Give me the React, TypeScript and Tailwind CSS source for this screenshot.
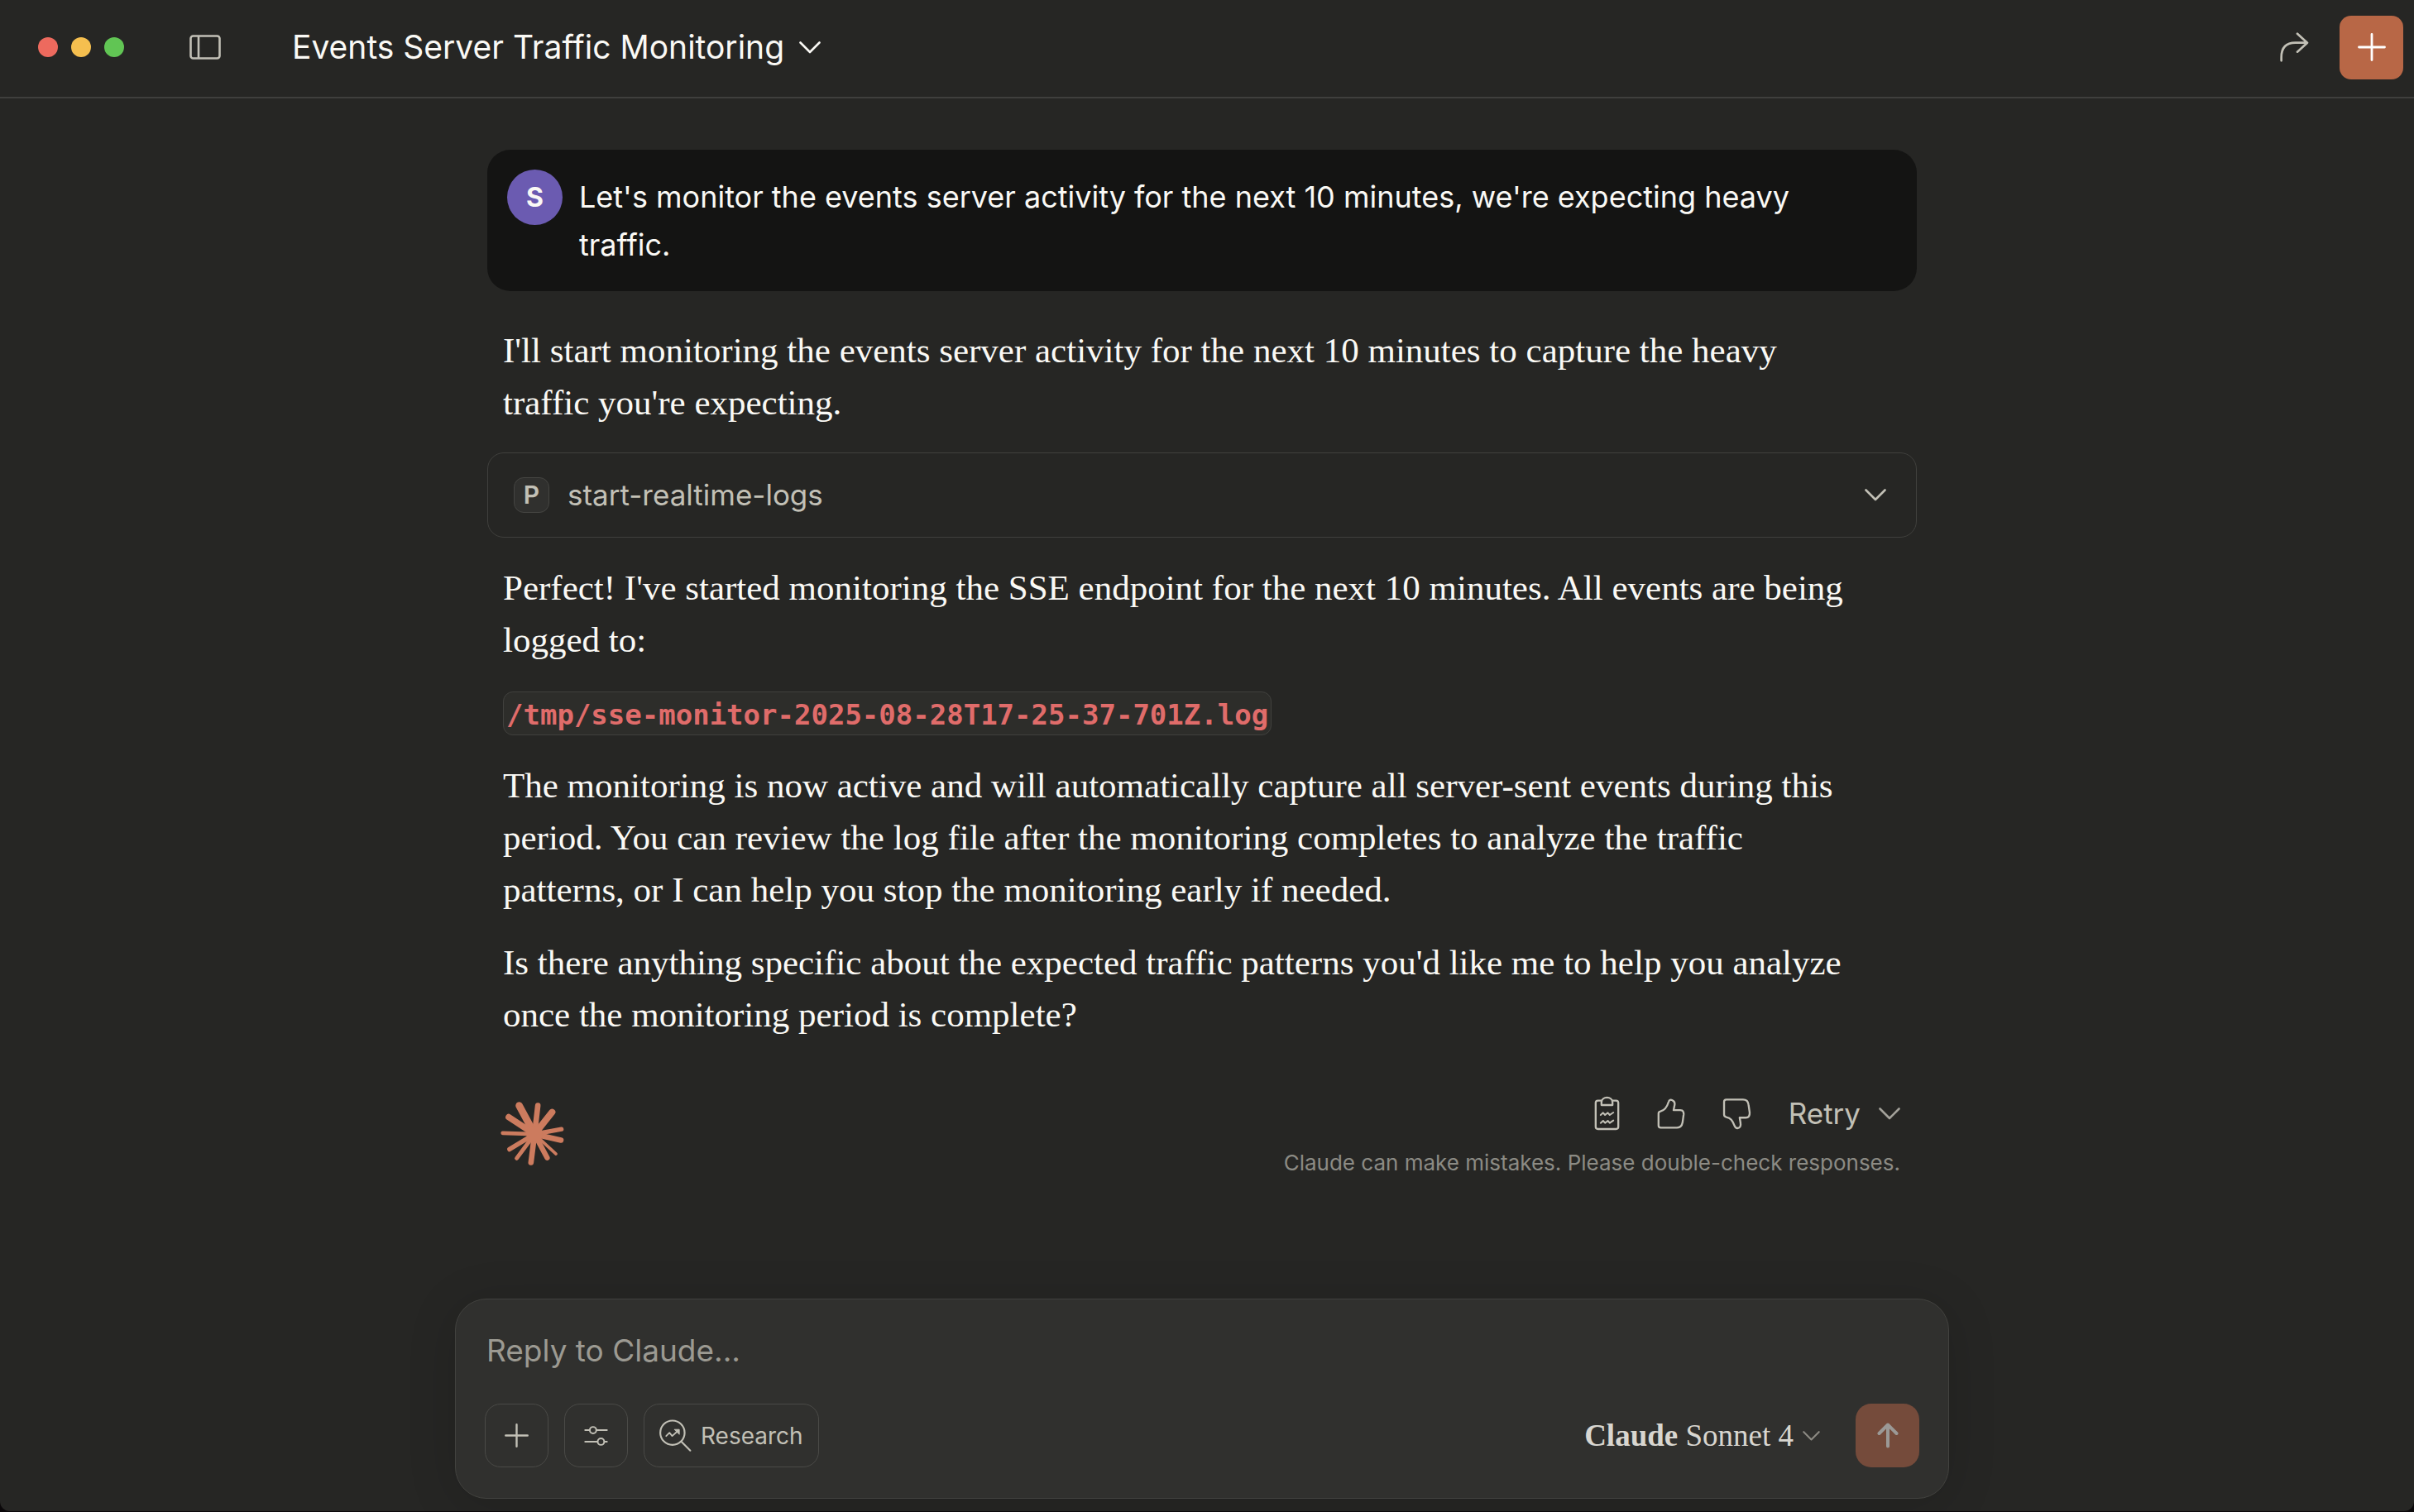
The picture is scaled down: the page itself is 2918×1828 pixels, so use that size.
import React from "react";

const PARAGRAPHS = [
  "The monitoring is now active and will automatically capture all server-sent events during this period. You can review the log file after the monitoring completes to analyze the traffic patterns, or I can help you stop the monitoring early if needed.",
  "Is there anything specific about the expected traffic patterns you'd like me to help you analyze once the monitoring period is complete?",
];

/* Tip position and thickness of each ray of the starburst, around (230, 213). */
const RAYS = [
  [174, 109, 26],
  [242, 109, 20],
  [294, 133, 24],
  [328, 195, 16],
  [326, 235, 20],
  [308, 285, 11],
  [276, 299, 19],
  [217, 316, 20],
  [165, 301, 15],
  [139, 268, 17],
  [114, 209, 14],
  [136, 151, 23],
];

function Starburst() {
  return (
    <svg viewBox="107 95 230 232" className="mt-3 h-[77px] w-[77px]" stroke="#cc7b5e" strokeLinecap="round" aria-hidden="true">
      {RAYS.map(([x, y, w]) => (
        <line key={`${x}-${y}`} x1={230} y1={213} x2={x} y2={y} strokeWidth={w} />
      ))}
      <circle cx={230} cy={213} r={30} fill="#cc7b5e" stroke="none" />
    </svg>
  );
}

function Chevron({ className }: { className: string }) {
  return (
    <svg viewBox="0 0 26 15" className={className} fill="none" stroke="currentColor" strokeWidth={2.6} strokeLinecap="round" strokeLinejoin="round" aria-hidden="true">
      <path d="M1.5 1.5 L13 13 L24.5 1.5" />
    </svg>
  );
}

function Plus({ className, width }: { className: string; width: number }) {
  return (
    <svg viewBox="0 0 34 34" className={className} fill="none" stroke="currentColor" strokeWidth={width} strokeLinecap="round" aria-hidden="true">
      <path d="M17 1.5 V32.5 M1.5 17 H32.5" />
    </svg>
  );
}

function TitleBar() {
  return (
    <header className="flex h-[119px] items-center border-b-2 border-[#3f3f3d] pr-[13px] pb-[3px] pl-[46px]">
      <div className="flex gap-4">
        <button aria-label="Close window" className="size-6 rounded-full bg-[#ed6a5e]" />
        <button aria-label="Minimize window" className="size-6 rounded-full bg-[#f5bf4f]" />
        <button aria-label="Zoom window" className="size-6 rounded-full bg-[#61c554]" />
      </div>
      <button aria-label="Toggle sidebar" className="ml-[79px]">
        <svg viewBox="0 0 38 30" className="h-[30px] w-[38px]" fill="none" stroke="#c2c0b6" strokeWidth={2.6} aria-hidden="true">
          <rect x={1.5} y={1.5} width={35} height={27} rx={3} />
          <path d="M11 1.5 V28.5" />
        </svg>
      </button>
      <button className="ml-[86px] flex items-center gap-[18px] text-[39px] leading-[58px]">
        <h1>Events Server Traffic Monitoring</h1>
        <Chevron className="h-[15px] w-[26px]" />
      </button>
      <button aria-label="Share" className="ml-auto">
        <svg viewBox="165 115 108 108" className="size-9" fill="none" stroke="#c2c0b6" strokeWidth={8} strokeLinecap="round" strokeLinejoin="round" aria-hidden="true">
          <path d="M173 218 V206 C173 172 190 153 224 153 H266 M231 120 L267 153 L231 186" />
        </svg>
      </button>
      <button aria-label="New chat" className="ml-[37px] flex size-[77px] items-center justify-center rounded-[14px] bg-[#b86746] text-white">
        <Plus className="size-[34px]" width={2.8} />
      </button>
    </header>
  );
}

function UserMessage() {
  return (
    <div className="flex items-start gap-5 rounded-[28px] bg-[#141413] px-6 pt-6 pb-[27px]">
      <div className="flex size-[67px] shrink-0 items-center justify-center rounded-full bg-[#6b5bb1] text-[32px] font-bold">S</div>
      <p className="max-w-[1500px] pt-1 text-[36px] leading-[58px]">
        Let's monitor the events server activity for the next 10 minutes, we're expecting heavy traffic.
      </p>
    </div>
  );
}

function ToolCall() {
  return (
    <button className="my-[29px] flex h-[103px] w-full items-center rounded-[20px] border border-[#40403d] pr-9 pl-[31px] text-left text-[35px] text-[#c2c0b6]">
      <span className="flex size-[43px] items-center justify-center rounded-xl border border-[#454542] bg-[#30302e] text-[30px] font-semibold">P</span>
      <span className="ml-[22px]">start-realtime-logs</span>
      <Chevron className="ml-auto h-[15px] w-[26px]" />
    </button>
  );
}

function MessageActions() {
  return (
    <div className="flex h-[52px] items-center gap-[45px] text-[#c2c0b6]">
      <button aria-label="Copy">
        <svg viewBox="84 44 92 126" className="h-[42px] w-[31px]" fill="none" stroke="currentColor" strokeWidth={7} strokeLinecap="round" strokeLinejoin="round" aria-hidden="true">
          <path d="M110 61 H97 Q89 61 89 69 V156 Q89 164 97 164 H163 Q171 164 171 156 V69 Q171 61 163 61 H151" />
          <path d="M110 77 V67 C111 44 149 44 150 67 V77 Z" />
          <path d="M107 113 L116 105 L123 113 L133 105 L140 113 L153 104 M107 142 L116 134 L123 142 L133 134 L140 142 L153 133" strokeWidth={6} />
        </svg>
      </button>
      <button aria-label="Good response">
        <svg viewBox="308 48 102 112" className="h-[37px] w-[34px]" fill="none" stroke="currentColor" strokeWidth={7} strokeLinecap="round" strokeLinejoin="round" aria-hidden="true">
          <path d="M313 103 Q313 96 320 95 C336 92 344 80 350 60 C352 52 358 52 364 55 C371 58 373 64 372 71 L368 91 H392 Q406 91 405 106 L401 135 Q398 155 380 155 H321 Q313 155 313 147 Z" />
        </svg>
      </button>
      <button aria-label="Bad response">
        <svg viewBox="538 54 104 116" className="h-[39px] w-[35px]" fill="none" stroke="currentColor" strokeWidth={7} strokeLinecap="round" strokeLinejoin="round" aria-hidden="true">
          <path d="M544 69 Q544 61 552 61 H612 Q630 61 632 80 L636 108 Q637 126 622 126 H600 L603 144 C605 156 602 163 592 164 C586 164 583 160 581 154 C574 136 568 127 552 124 Q544 122 544 115 Z" />
        </svg>
      </button>
      <button className="flex items-center gap-[22px] text-[35px]">
        Retry
        <Chevron className="h-[15px] w-[26px] text-[#a3a19a]" />
      </button>
    </div>
  );
}

function Composer() {
  return (
    <form className="mt-auto mb-[15px] rounded-[38px] border border-[#42423f] bg-[#30302e] px-[35px] pt-8 pb-[37px] shadow-[0_8px_60px_rgba(0,0,0,0.14)]">
      <input
        type="text"
        aria-label="Reply to Claude"
        placeholder="Reply to Claude..."
        className="block h-[58px] w-full bg-transparent pl-[2px] text-[37px] outline-none placeholder:text-[#9c9a92] placeholder:opacity-100"
      />
      <div className="mt-9 flex items-center gap-[19px] text-[#c2c0b6]">
        <button type="button" aria-label="Add attachment" className="flex size-[77px] items-center justify-center rounded-[19px] border border-[#4a4a47]">
          <Plus className="size-[29px]" width={2.8} />
        </button>
        <button type="button" aria-label="Search and tools" className="flex size-[77px] items-center justify-center rounded-[19px] border border-[#4a4a47]">
          <svg viewBox="526 522 88 78" className="h-[26px] w-[29px]" fill="none" stroke="currentColor" strokeWidth={6} strokeLinecap="round" aria-hidden="true">
            <path d="M530 540 H546 M573 540 H610 M530 582 H574 M601 582 H610" />
            <circle cx={559} cy={540} r={12} />
            <circle cx={588} cy={582} r={12} />
          </svg>
        </button>
        <button type="button" className="flex h-[77px] items-center gap-[11px] rounded-[19px] border border-[#4a4a47] px-[18px] text-[28px]">
          <svg viewBox="799 501 118 118" className="size-[39px]" fill="none" stroke="currentColor" strokeWidth={6.5} strokeLinecap="round" strokeLinejoin="round" aria-hidden="true">
            <circle cx={847} cy={550} r={44.5} />
            <path d="M879 582 L912 615" />
            <path d="M824 562 L836 550 L846 562 L869 541" strokeWidth={5.5} />
            <path d="M855 538 H872 V555 Z" fill="currentColor" strokeWidth={3} />
          </svg>
          Research
        </button>
        <button type="button" className="ml-auto flex items-center gap-[11px] font-['Liberation_Serif',serif] text-[37px] text-[#d8d6d0]">
          <span>
            <span className="font-bold">Claude</span> Sonnet 4
          </span>
          <Chevron className="h-3 w-[21px] text-[#8c8a83]" />
        </button>
        <button type="submit" aria-label="Send message" className="ml-6 flex size-[77px] items-center justify-center rounded-[19px] bg-[#754b3b] text-[#9b9996]">
          <svg viewBox="0 0 26 31" className="h-[31px] w-[26px]" fill="none" stroke="currentColor" strokeWidth={4} strokeLinecap="round" strokeLinejoin="round" aria-hidden="true">
            <path d="M13 28.5 V2.5 M2.5 13 L13 2.5 L23.5 13" />
          </svg>
        </button>
      </div>
    </form>
  );
}

export default function App() {
  return (
    <div className="min-h-screen bg-[#0b080a] pb-px font-['Inter',sans-serif] text-[#faf9f5]">
      <div className="flex min-h-[calc(100vh-1px)] flex-col rounded-b-[12px] bg-[#262624]">
        <TitleBar />
        <main className="flex flex-1 flex-col pr-3">
          <div className="mx-auto flex w-full max-w-[1806px] flex-1 flex-col">
            <section aria-label="Conversation" className="px-[39px] pt-[62px] pb-12">
              <UserMessage />
              <article className="mt-10">
                <div className="font-['Liberation_Serif',serif] text-[43px] leading-[63px]">
                  <p className="max-w-[1664px] px-[19px]">
                    I'll start monitoring the events server activity for the next 10 minutes to capture the heavy traffic you're expecting.
                  </p>
                  <div className="font-['Inter',sans-serif] leading-normal">
                    <ToolCall />
                  </div>
                  <div className="flex max-w-[1678px] flex-col gap-[25px] px-[19px]">
                    <p>Perfect! I've started monitoring the SSE endpoint for the next 10 minutes. All events are being logged to:</p>
                    <p>
                      <code className="rounded-xl border border-[#40403d] bg-[#2d2d2a] px-[3px] pt-[7px] pb-1 font-['DejaVu_Sans_Mono',monospace] text-[34px] leading-none font-bold text-[#e06c6a]">
                        /tmp/sse-monitor-2025-08-28T17-25-37-701Z.log
                      </code>
                    </p>
                    {PARAGRAPHS.map((text) => (
                      <p key={text}>{text}</p>
                    ))}
                  </div>
                </div>
                <footer className="mt-[62px] flex items-start justify-between pr-5 pl-4">
                  <Starburst />
                  <div className="flex flex-col items-end">
                    <MessageActions />
                    <p className="mt-[14px] text-[26px] leading-10 text-[#8c8b84]">
                      Claude can make mistakes. Please double-check responses.
                    </p>
                  </div>
                </footer>
              </article>
            </section>
            <Composer />
          </div>
        </main>
      </div>
    </div>
  );
}
